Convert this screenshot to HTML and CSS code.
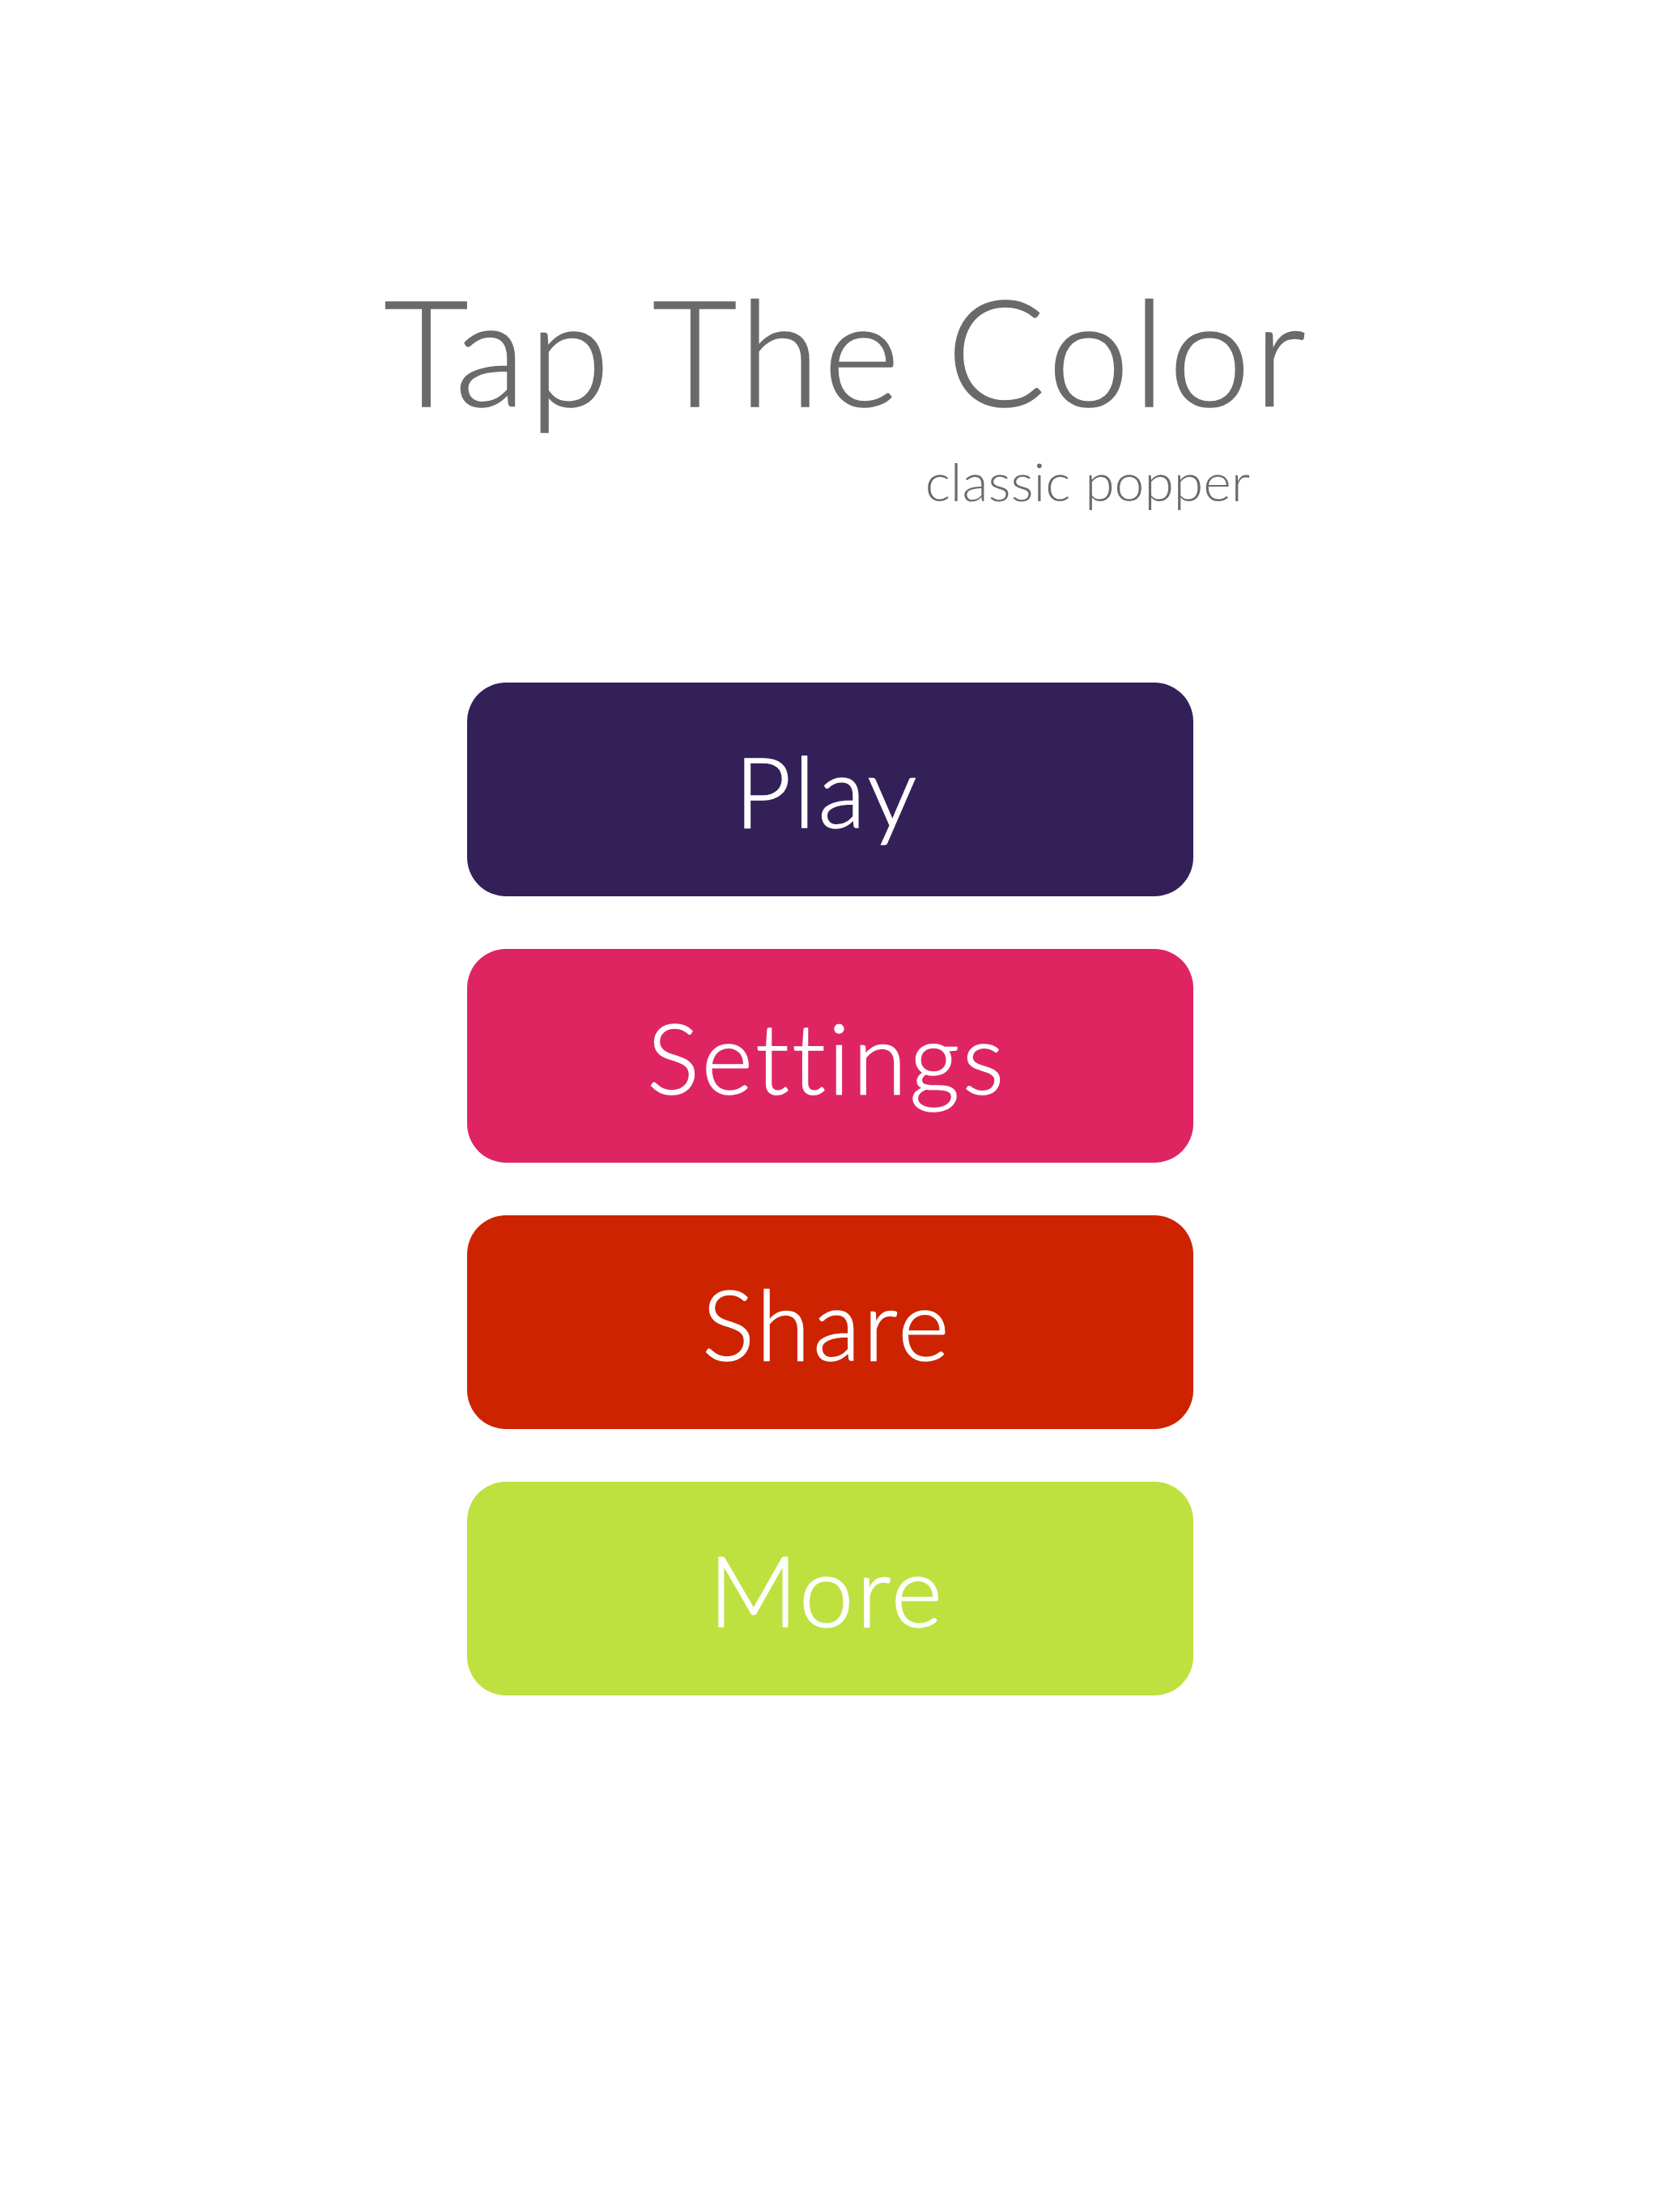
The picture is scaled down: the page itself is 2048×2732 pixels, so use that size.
FILE: index.html
```html
<!DOCTYPE html>
<html lang="en">

<head>
    <meta charset="UTF-8">
    <meta name="viewport" content="width=device-width, initial-scale=1.0">
    <title>Tap The Color</title>
    <link rel="stylesheet" href="styles.css">
</head>

<body>

    <div class="header">
        <div class="title">Tap The Color</div>
        <div class="subtitle">classic popper</div>
    </div>

    <div class="menu">
        <button class="btn play">Play</button>
        <button class="btn settings">Settings</button>
        <button class="btn share">Share</button>
        <button class="btn more">More</button>
    </div>

</body>

</html>
```

FILE: styles.css
```css
* {
    margin: 0;
    padding: 0;
    box-sizing: border-box;
    font-family: 'Lato', 'Open Sans', sans-serif;
}

body {
    background: #fff;
    width: 2048px;
    min-height: 2732px;
}

.header {
    width: 1144px;
    margin-left: 474px;
    padding-top: 324px;
    color: #6b6a6b;
}

.title {
    font-size: 181px;
    line-height: 217px;
    font-weight: 300;
    letter-spacing: 4.3px;
    white-space: nowrap;
    -webkit-text-stroke: 1.5px #6b6a6b;
}

.subtitle {
    font-size: 66px;
    line-height: 77px;
    font-weight: 300;
    text-align: right;
    padding-right: 74px;
    margin-top: 14px;
    white-space: nowrap;
}

.menu {
    width: 897px;
    margin-left: 577px;
    margin-top: 211px;
    display: flex;
    flex-direction: column;
    gap: 65px;
}

.btn {
    height: 264px;
    border: none;
    border-radius: 48px;
    padding-right: 8px;
    color: #fff;
    font-size: 121px;
    font-weight: 300;
    letter-spacing: 3.5px;
    -webkit-text-stroke: 1.5px #fff;
    display: flex;
    justify-content: center;
    align-items: center;
    cursor: pointer;
}

.play {
    background: #332059;
}

.settings {
    background: #de2562;
}

.share {
    background: #cd2300;
}

.more {
    background: #bee13f;
}
```
